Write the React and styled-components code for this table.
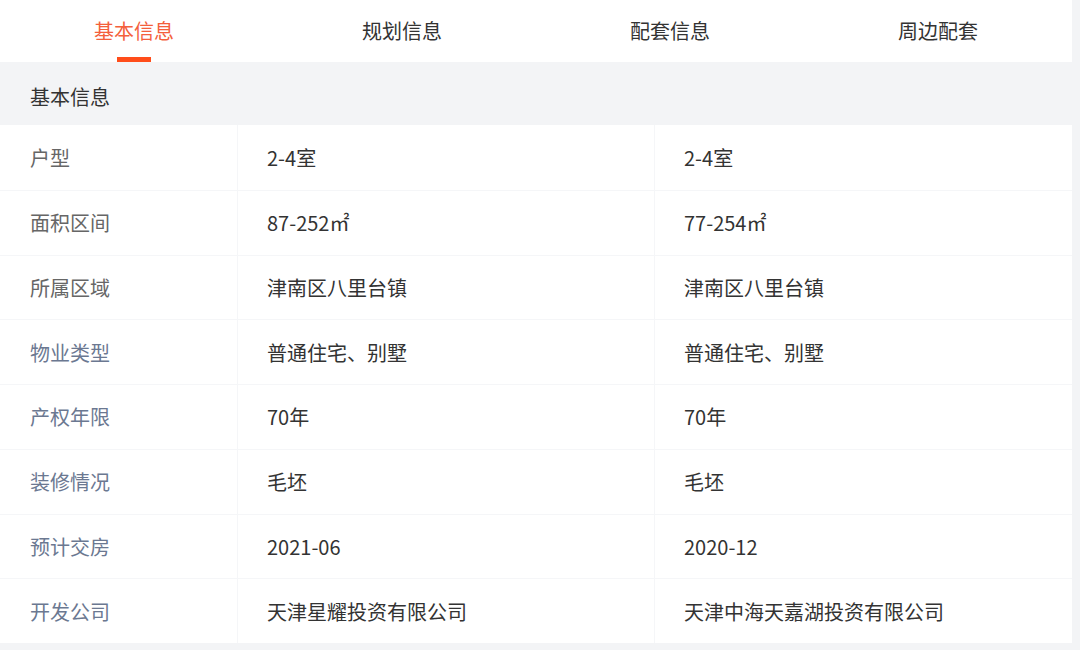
import React, { useState } from 'react'
import styled, { createGlobalStyle } from 'styled-components'

const GlobalStyle = createGlobalStyle`
  body {
    margin: 0;
    background: #f3f4f6;
    font-family: "Noto Sans CJK SC", "Noto Sans", sans-serif;
  }
`

const Page = styled.div`
  width: 1072px;
`

const TabBar = styled.nav`
  display: grid;
  grid-template-columns: repeat(4, 1fr);
  height: 62px;
  background: #fff;
`

const Tab = styled.div`
  position: relative;
  display: flex;
  align-items: center;
  justify-content: center;
  padding-bottom: 1px;
  font-size: 20px;
  color: ${({ active }) => (active ? '#f4603c' : '#333')};
  cursor: pointer;

  &::after {
    content: '';
    display: ${({ active }) => (active ? 'block' : 'none')};
    position: absolute;
    bottom: 0;
    left: 50%;
    width: 34px;
    height: 5px;
    margin-left: -17px;
    background: #ff4d1a;
  }
`

const SectionTitle = styled.div`
  display: flex;
  align-items: center;
  height: 63px;
  box-sizing: border-box;
  padding: 5px 0 0 30px;
  font-size: 20px;
  color: #333;
`

const Table = styled.div`
  background: #fff;
`

const Row = styled.div`
  display: grid;
  grid-template-columns: 237px 417px 1fr;
  height: 64.75px;
  box-sizing: border-box;
  border-top: ${({ first }) => (first ? 'none' : '1px solid #f5f6f8')};
`

const Cell = styled.div`
  display: flex;
  align-items: center;
  padding-left: 29px;
  font-size: 20px;
  color: #333;
  border-left: 1px solid #f5f6f8;
`

const Label = styled(Cell)`
  padding-left: 30px;
  border-left: none;
  color: ${({ muted }) => (muted ? '#6b7891' : '#666')};
`

const tabs = ['基本信息', '规划信息', '配套信息', '周边配套']

const rows = [
  ['户型', '2-4室', '2-4室'],
  ['面积区间', '87-252㎡', '77-254㎡'],
  ['所属区域', '津南区八里台镇', '津南区八里台镇'],
  ['物业类型', '普通住宅、别墅', '普通住宅、别墅', true],
  ['产权年限', '70年', '70年', true],
  ['装修情况', '毛坯', '毛坯', true],
  ['预计交房', '2021-06', '2020-12', true],
  ['开发公司', '天津星耀投资有限公司', '天津中海天嘉湖投资有限公司', true],
]

const App = () => {
  const [current, setCurrent] = useState(0)
  return (
    <>
      <GlobalStyle />
      <Page>
        <TabBar>
          {tabs.map((t, i) => (
            <Tab key={t} active={i === current} onClick={() => setCurrent(i)}>
              {t}
            </Tab>
          ))}
        </TabBar>
        <SectionTitle>基本信息</SectionTitle>
        <Table>
          {rows.map(([label, a, b, muted], i) => (
            <Row key={label} first={i === 0}>
              <Label muted={muted}>{label}</Label>
              <Cell>{a}</Cell>
              <Cell>{b}</Cell>
            </Row>
          ))}
        </Table>
      </Page>
    </>
  )
}

export default App
